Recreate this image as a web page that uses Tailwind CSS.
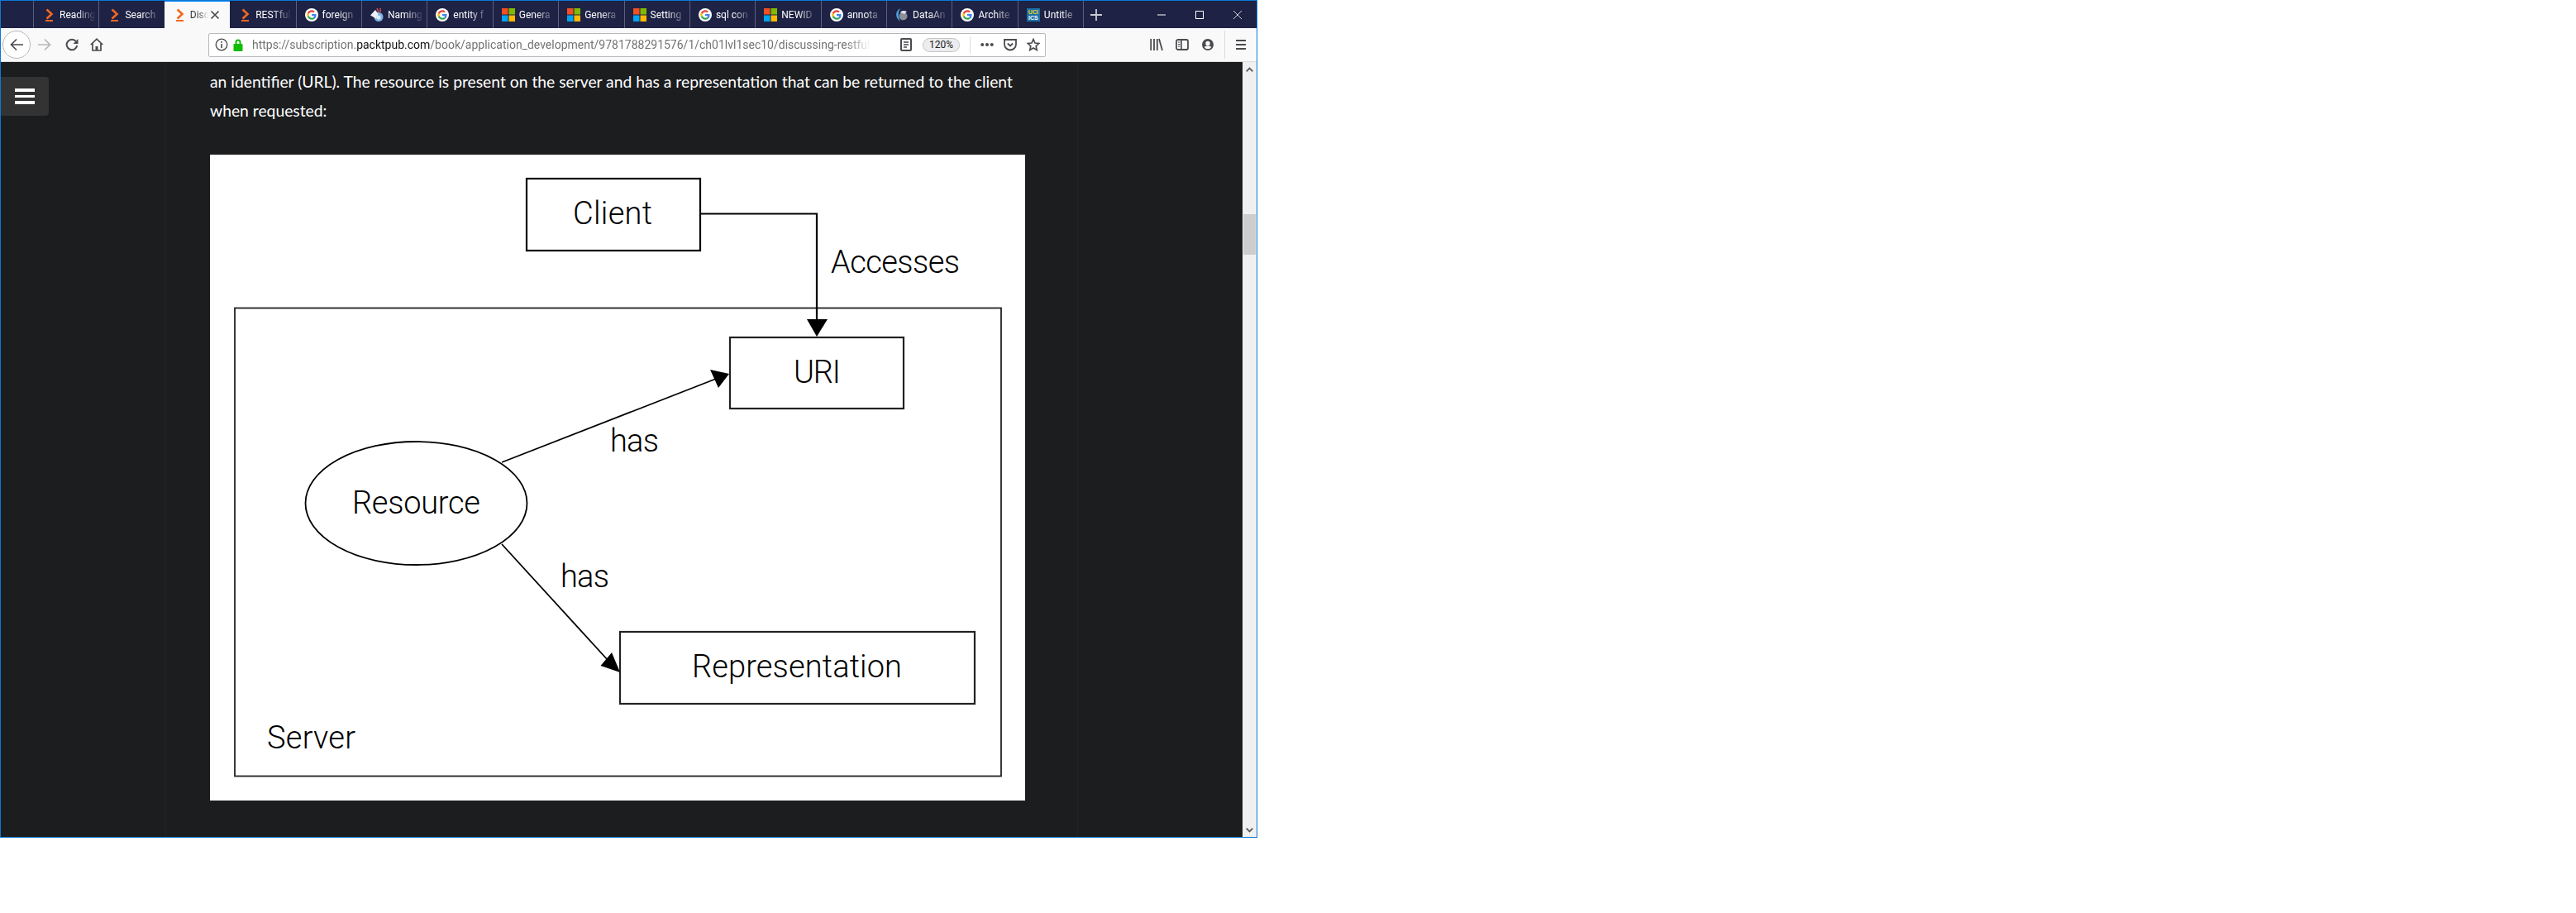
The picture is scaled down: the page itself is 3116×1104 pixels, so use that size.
<!DOCTYPE html>
<html lang="en">
<head>
  <meta charset="UTF-8" />
  <title>Discussing RESTful services</title>
  <script src="https://cdn.jsdelivr.net/npm/@tailwindcss/browser@4"></script>
</head>
<body class="bg-white font-[family-name:Roboto,sans-serif]">
  <!-- shared tab icons -->
  <svg class="hidden">
    <symbol id="packt" viewBox="0 0 16 16">
      <path d="M5.5 1.5 11.5 7 5.5 12.5" fill="none" stroke="#f26722" stroke-width="2.6"/>
      <rect x="4" y="14" width="9" height="2" fill="#f26722"/>
    </symbol>
    <symbol id="google" viewBox="0 0 16 16">
      <circle cx="8" cy="8" r="8" fill="#fff"/>
      <g transform="translate(2.2 2.2) scale(.242)">
        <path fill="#EA4335" d="M24 9.5c3.54 0 6.71 1.22 9.21 3.6l6.85-6.85C35.9 2.38 30.47 0 24 0 14.62 0 6.51 5.38 2.56 13.22l7.98 6.19C12.43 13.72 17.74 9.5 24 9.5z"/>
        <path fill="#4285F4" d="M46.98 24.55c0-1.57-.15-3.09-.38-4.55H24v9.02h12.94c-.58 2.96-2.26 5.48-4.78 7.18l7.73 6c4.51-4.18 7.09-10.36 7.09-17.65z"/>
        <path fill="#FBBC05" d="M10.53 28.59c-.48-1.45-.76-2.99-.76-4.59s.27-3.14.76-4.59l-7.98-6.19C.92 16.46 0 20.12 0 24c0 3.88.92 7.54 2.56 10.78l7.97-6.19z"/>
        <path fill="#34A853" d="M24 48c6.48 0 11.93-2.13 15.89-5.81l-7.73-6c-2.15 1.45-4.92 2.3-8.16 2.3-6.26 0-11.57-4.22-13.47-9.91l-7.98 6.19C6.51 42.62 14.62 48 24 48z"/>
      </g>
    </symbol>
    <symbol id="ms" viewBox="0 0 16 16">
      <rect x="0" y="0" width="7.5" height="7.5" fill="#f25022"/>
      <rect x="8.5" y="0" width="7.5" height="7.5" fill="#7fba00"/>
      <rect x="0" y="8.5" width="7.5" height="7.5" fill="#00a4ef"/>
      <rect x="8.5" y="8.5" width="7.5" height="7.5" fill="#ffb900"/>
    </symbol>
  </svg>

  <div class="w-[1521px] h-[1013px] border border-[#0a78d7] flex flex-col overflow-hidden">
    <!-- tab strip -->
    <div class="h-[33px] flex bg-[#1e2244] text-[12px] text-white">
      <div class="w-[39px]"></div>

      <div class="w-[79.4px] shrink-0 border-l border-[#5c5f7c] flex items-center pl-[10px] gap-[5px]">
        <svg class="w-4 h-4 shrink-0"><use href="#packt"/></svg>
        <span class="w-[44px] whitespace-nowrap [mask-image:linear-gradient(to_right,black_45%,transparent)]">Reading</span>
      </div>
      <div class="w-[79.4px] shrink-0 border-l border-[#5c5f7c] flex items-center pl-[10px] gap-[5px]">
        <svg class="w-4 h-4 shrink-0"><use href="#packt"/></svg>
        <span class="w-[44px] whitespace-nowrap [mask-image:linear-gradient(to_right,black_45%,transparent)]">Search</span>
      </div>
      <div class="w-[79.4px] shrink-0 bg-[#f9f9fa] border-t-2 border-[#0a84ff] -mt-px flex items-center pl-[10px] gap-[5px] text-[#38383d]">
        <svg class="w-4 h-4 shrink-0"><use href="#packt"/></svg>
        <span class="w-[22px] whitespace-nowrap [mask-image:linear-gradient(to_right,black_40%,transparent)]">Disc</span>
        <svg class="w-[12px] h-[12px] ml-[-3px] shrink-0" viewBox="0 0 12 12"><path d="M1.5 1.5 10.5 10.5M10.5 1.5 1.5 10.5" stroke="#4a4a4f" stroke-width="1.7"/></svg>
      </div>
      <div class="w-[79.4px] shrink-0 flex items-center pl-[10px] gap-[5px]">
        <svg class="w-4 h-4 shrink-0"><use href="#packt"/></svg>
        <span class="w-[44px] whitespace-nowrap [mask-image:linear-gradient(to_right,black_45%,transparent)]">RESTful</span>
      </div>
      <div class="w-[79.4px] shrink-0 border-l border-[#5c5f7c] flex items-center pl-[10px] gap-[5px]">
        <svg class="w-4 h-4 shrink-0"><use href="#google"/></svg>
        <span class="w-[44px] whitespace-nowrap [mask-image:linear-gradient(to_right,black_45%,transparent)]">foreign</span>
      </div>
      <div class="w-[79.4px] shrink-0 border-l border-[#5c5f7c] flex items-center pl-[10px] gap-[5px]">
        <svg class="w-4 h-4 shrink-0" viewBox="0 0 16 16">
          <circle cx="10" cy="10.500" r="5.500" fill="#7fb2e5"/>
          <path d="M0 8.500 6 2l3.500 4.500-2.500 6z" fill="#eef2f8"/>
          <path d="M8 0l2 5M12 0v5" stroke="#d9534f" stroke-width="1.500"/>
          <circle cx="10" cy="11" r="2.600" fill="#dcebf9"/>
        </svg>
        <span class="w-[44px] whitespace-nowrap [mask-image:linear-gradient(to_right,black_45%,transparent)]">Naming</span>
      </div>
      <div class="w-[79.4px] shrink-0 border-l border-[#5c5f7c] flex items-center pl-[10px] gap-[5px]">
        <svg class="w-4 h-4 shrink-0"><use href="#google"/></svg>
        <span class="w-[44px] whitespace-nowrap [mask-image:linear-gradient(to_right,black_45%,transparent)]">entity f</span>
      </div>
      <div class="w-[79.4px] shrink-0 border-l border-[#5c5f7c] flex items-center pl-[10px] gap-[5px]">
        <svg class="w-4 h-4 shrink-0"><use href="#ms"/></svg>
        <span class="w-[44px] whitespace-nowrap [mask-image:linear-gradient(to_right,black_45%,transparent)]">Genera</span>
      </div>
      <div class="w-[79.4px] shrink-0 border-l border-[#5c5f7c] flex items-center pl-[10px] gap-[5px]">
        <svg class="w-4 h-4 shrink-0"><use href="#ms"/></svg>
        <span class="w-[44px] whitespace-nowrap [mask-image:linear-gradient(to_right,black_45%,transparent)]">Genera</span>
      </div>
      <div class="w-[79.4px] shrink-0 border-l border-[#5c5f7c] flex items-center pl-[10px] gap-[5px]">
        <svg class="w-4 h-4 shrink-0"><use href="#ms"/></svg>
        <span class="w-[44px] whitespace-nowrap [mask-image:linear-gradient(to_right,black_45%,transparent)]">Setting</span>
      </div>
      <div class="w-[79.4px] shrink-0 border-l border-[#5c5f7c] flex items-center pl-[10px] gap-[5px]">
        <svg class="w-4 h-4 shrink-0"><use href="#google"/></svg>
        <span class="w-[44px] whitespace-nowrap [mask-image:linear-gradient(to_right,black_45%,transparent)]">sql con</span>
      </div>
      <div class="w-[79.4px] shrink-0 border-l border-[#5c5f7c] flex items-center pl-[10px] gap-[5px]">
        <svg class="w-4 h-4 shrink-0"><use href="#ms"/></svg>
        <span class="w-[44px] whitespace-nowrap [mask-image:linear-gradient(to_right,black_45%,transparent)]">NEWID</span>
      </div>
      <div class="w-[79.4px] shrink-0 border-l border-[#5c5f7c] flex items-center pl-[10px] gap-[5px]">
        <svg class="w-4 h-4 shrink-0"><use href="#google"/></svg>
        <span class="w-[44px] whitespace-nowrap [mask-image:linear-gradient(to_right,black_45%,transparent)]">annota</span>
      </div>
      <div class="w-[79.4px] shrink-0 border-l border-[#5c5f7c] flex items-center pl-[10px] gap-[5px]">
        <svg class="w-4 h-4 shrink-0" viewBox="0 0 16 16">
          <path d="M6 0C0 3-1 11 6 16 3 10 3 5 6 0z" fill="#4aa3df"/>
          <circle cx="9.500" cy="9.500" r="5" fill="#8b8f99"/>
          <path d="M6 5c2-2.500 5-2.500 8-1l-3 3z" fill="#dfe2e8"/>
        </svg>
        <span class="w-[44px] whitespace-nowrap [mask-image:linear-gradient(to_right,black_45%,transparent)]">DataAn</span>
      </div>
      <div class="w-[79.4px] shrink-0 border-l border-[#5c5f7c] flex items-center pl-[10px] gap-[5px]">
        <svg class="w-4 h-4 shrink-0"><use href="#google"/></svg>
        <span class="w-[44px] whitespace-nowrap [mask-image:linear-gradient(to_right,black_45%,transparent)]">Archite</span>
      </div>
      <div class="w-[79.4px] shrink-0 border-l border-[#5c5f7c] flex items-center pl-[10px] gap-[5px]">
        <div class="w-4 h-4 shrink-0 bg-[#1b6fa8] flex flex-col items-center justify-center text-[7px] leading-[7px] font-bold font-[family-name:'Liberation_Sans',sans-serif]">
          <span class="text-[#f5d518]">UCI</span>
          <span class="text-white">ICS</span>
        </div>
        <span class="w-[44px] whitespace-nowrap [mask-image:linear-gradient(to_right,black_45%,transparent)]">Untitle</span>
      </div>

      <div class="w-px bg-[#5c5f7c] shrink-0"></div>
      <div class="w-[30px] shrink-0 flex items-center justify-center">
        <svg class="w-[14px] h-[14px]" viewBox="0 0 14 14"><path d="M7 0V14M0 7H14" stroke="#c9cad4" stroke-width="1.8"/></svg>
      </div>
      <div class="ml-auto flex">
        <div class="w-[46px] flex items-center justify-center">
          <svg class="w-[10px] h-[10px]" viewBox="0 0 10 10"><path d="M0 5H10" stroke="#fff"/></svg>
        </div>
        <div class="w-[46px] flex items-center justify-center">
          <svg class="w-[10px] h-[10px]" viewBox="0 0 10 10"><rect x=".5" y=".5" width="9" height="9" fill="none" stroke="#fff"/></svg>
        </div>
        <div class="w-[46px] flex items-center justify-center">
          <svg class="w-[10px] h-[10px]" viewBox="0 0 10 10"><path d="M0 0 10 10M10 0 0 10" stroke="#fff" stroke-width=".8"/></svg>
        </div>
      </div>
    </div>

    <!-- nav toolbar -->
    <div class="h-[41px] flex items-center bg-[#f9f9fa] border-b border-[#dcdcde] text-[#4a4a4f]">
      <div class="ml-[2px] w-[34px] h-[34px] shrink-0 rounded-full border border-[#b8b8ba] bg-white flex items-center justify-center">
        <svg class="w-4 h-4" viewBox="0 0 16 16" fill="none" stroke="#4a4a4f" stroke-width="1.7"><path d="M16 8H1.5M8 1.5 1.500 8 8 14.500"/></svg>
      </div>
      <div class="ml-[2px] w-[30px] shrink-0 flex justify-center">
        <svg class="w-4 h-4" viewBox="0 0 16 16" fill="none" stroke="#b6b6b8" stroke-width="1.7"><path d="M0 8H14.5M8 1.5 14.500 8 8 14.500"/></svg>
      </div>
      <div class="ml-[3px] w-[30px] shrink-0 flex justify-center">
        <svg class="w-4 h-4" viewBox="0 0 16 16" fill="none"><path d="M13 4.2A6.3 6.3 0 1 0 14.2 9" stroke="#4a4a4f" stroke-width="2"/><path d="M15.5 1v6h-6z" fill="#4a4a4f"/></svg>
      </div>
      <div class="w-[30px] shrink-0 flex justify-center">
        <svg class="w-4 h-4" viewBox="0 0 16 16" fill="none" stroke="#4a4a4f" stroke-width="1.7"><path d="M.8 8 8 1.2 15.2 8M3 6.5V15H13V6.5"/><rect x="6.5" y="10" width="3" height="5" fill="#4a4a4f" stroke="none"/></svg>
      </div>

      <!-- url bar -->
      <div class="ml-[120px] w-[1013px] h-[29px] shrink-0 flex items-center bg-white border border-[#b9b9bb] rounded-[2px] pl-[7px]">
        <svg class="w-4 h-4 shrink-0" viewBox="0 0 16 16" fill="none" stroke="#4a4a4f"><circle cx="8" cy="8" r="6.8" stroke-width="1.3"/><path d="M8 7v5M8 4v1.7" stroke-width="1.6"/></svg>
        <svg class="ml-[4px] w-4 h-4 shrink-0" viewBox="0 0 16 16" fill="#12bc00"><path d="M4.5 7V5a3.5 3.5 0 0 1 7 0v2h-2V5a1.5 1.5 0 0 0-3 0v2z"/><rect x="2.5" y="7" width="11" height="9" rx="1"/></svg>
        <div class="ml-[9px] w-[748px] shrink-0 whitespace-nowrap text-[14px] text-[#737373] [mask-image:linear-gradient(to_right,black_96%,transparent)]">https://subscription.<span class="text-[#111]">packtpub.com</span>/book/application_development/9781788291576/1/ch01lvl1sec10/discussing-restful-ser</div>
        <svg class="ml-[35px] w-4 h-4 shrink-0" viewBox="0 0 16 16" fill="none" stroke="#4a4a4f"><rect x="2" y="1" width="12" height="14" rx="1" stroke-width="2"/><path d="M5 5H11M5 8H11M5 11H9" stroke-width="1.3"/></svg>
        <div class="ml-[12px] w-[45px] h-[17px] shrink-0 rounded-full bg-[#ededf0] border border-[#c4c4c6] flex items-center justify-center text-[12px] text-[#222]">120%</div>
        <div class="ml-[12px] w-px h-[21px] shrink-0 bg-[#dcdcde]"></div>
        <svg class="ml-[12px] w-4 h-4 shrink-0" viewBox="0 0 16 16" fill="#4a4a4f"><circle cx="2.2" cy="8" r="2"/><circle cx="8" cy="8" r="2"/><circle cx="13.8" cy="8" r="2"/></svg>
        <svg class="ml-[12px] w-4 h-4 shrink-0" viewBox="0 0 16 16" fill="none" stroke="#4a4a4f"><path d="M1 2H15V7.5C15 11.5 11.5 14.5 8 14.5S1 11.5 1 7.5z" stroke-width="1.8"/><path d="M4.8 6.5 8 9.5 11.2 6.5" stroke-width="1.8"/></svg>
        <svg class="ml-[12px] w-4 h-4 shrink-0" viewBox="0 0 16 16" fill="none" stroke="#4a4a4f" stroke-width="1.7"><path d="M8 1.5 10 6l4.8.5-3.6 3.2 1 4.8L8 12l-4.2 2.5 1-4.8L1.2 6.5 6 6z"/></svg>
      </div>

      <!-- right side -->
      <div class="ml-[118px] w-[31px] shrink-0 flex justify-center">
        <svg class="w-4 h-4" viewBox="0 0 16 16" fill="none" stroke="#4a4a4f" stroke-width="1.8"><path d="M1.2 1V15M5 1V15M8.8 1V15M11 1 15 15"/></svg>
      </div>
      <div class="w-[31px] shrink-0 flex justify-center">
        <svg class="w-4 h-4" viewBox="0 0 16 16" fill="none" stroke="#4a4a4f"><rect x="1" y="2" width="14" height="12" rx="2" stroke-width="1.8"/><path d="M7 2V14" stroke-width="1.6"/><path d="M3 5H5.5M3 7.5H5.5M3 10H5.5" stroke-width="1.2"/></svg>
      </div>
      <div class="w-[32px] shrink-0 flex justify-center">
        <svg class="w-4 h-4" viewBox="0 0 16 16" fill="#4a4a4f"><path fill-rule="evenodd" d="M8 1a7 7 0 1 0 0 14A7 7 0 0 0 8 1zM8 3.8a2.7 2.7 0 1 1 0 5.4 2.7 2.7 0 0 1 0-5.4zM3.7 11c1-.9 2.7-1.4 4.3-1.4s3.3.5 4.3 1.4A5.4 5.4 0 0 1 8 13.3 5.4 5.4 0 0 1 3.7 11z"/></svg>
      </div>
      <div class="ml-[4px] w-px h-[34px] shrink-0 bg-[#dcdcde]"></div>
      <div class="ml-[4px] w-[30px] shrink-0 flex justify-center">
        <svg class="w-4 h-4" viewBox="0 0 16 16" fill="#4a4a4f"><rect x="2" y="2" width="12" height="2"/><rect x="2" y="7" width="12" height="2"/><rect x="2" y="12" width="12" height="2"/></svg>
      </div>
    </div>

    <!-- page -->
    <div class="flex-1 flex min-h-0 bg-[#1c1d1f]">
      <div class="w-[199px] shrink-0 pt-[18px]">
        <div class="w-[58px] h-[47px] bg-[#333334] rounded-r-[4px] flex flex-col items-center justify-center gap-[4px]">
          <div class="w-[24px] h-[3.5px] bg-white"></div>
          <div class="w-[24px] h-[3.5px] bg-white"></div>
          <div class="w-[24px] h-[3.5px] bg-white"></div>
        </div>
      </div>

      <main class="w-[1104px] shrink-0 border-x border-[#222325] pl-[53px] pt-[6px] overflow-hidden">
        <p class="text-[19.3px] leading-[35px] text-white whitespace-nowrap font-[family-name:Lato,sans-serif]">an identifier (URL). The resource is present on the server and has a representation that can be returned to the client<br />when requested:</p>

        <!-- figure, coordinates follow the page pixels -->
        <div class="mt-[36px] w-[986px] h-[781px] bg-white">
          <svg class="block w-[986px] h-[781px]" viewBox="254 187 986 781" fill="none" stroke="#000">
            <rect x="284" y="372.5" width="927" height="566" stroke="#222" stroke-width="1.8"/>
            <rect x="637" y="216" width="210" height="87" stroke-width="2.2"/>
            <rect x="883" y="408" width="210" height="86" stroke="#222" stroke-width="2.2"/>
            <rect x="750" y="764" width="429" height="87" stroke="#222" stroke-width="2.2"/>
            <ellipse cx="503.5" cy="608.5" rx="134" ry="74.5" stroke-width="1.8"/>

            <path d="M847 258.5H988V390" stroke-width="2.2"/>
            <path d="M988 407 976 386H1001z" fill="#000" stroke="none"/>
            <path d="M607 559 870 456.5" stroke-width="1.8"/>
            <path d="M882 452 859 447 869 469z" fill="#000" stroke="none"/>
            <path d="M607 658 735 798" stroke-width="1.8"/>
            <path d="M750 813 726.5 805 740 789z" fill="#000" stroke="none"/>

            <g fill="#000" stroke="none" font-family="Roboto, sans-serif" font-weight="300" font-size="38">
              <text x="693" y="271" textLength="96">Client</text>
              <text x="1005" y="330" textLength="156">Accesses</text>
              <text x="960" y="463" textLength="57">URI</text>
              <text x="426" y="621" textLength="155">Resource</text>
              <text x="738" y="546" textLength="59">has</text>
              <text x="678" y="710" textLength="59">has</text>
              <text x="837" y="819" textLength="254">Representation</text>
              <text x="323" y="905" textLength="107">Server</text>
            </g>
          </svg>
        </div>
      </main>

      <div class="flex-1"></div>

      <!-- scrollbar -->
      <div class="w-[17px] shrink-0 bg-[#f0f0f0] relative">
        <svg class="absolute left-[4px] top-[6px] w-[9px] h-[6px]" viewBox="0 0 9 6" fill="none" stroke="#5a5a5a" stroke-width="1.8"><path d="M.7 5.3 4.5 1.5 8.3 5.3"/></svg>
        <div class="absolute left-px top-[184px] w-[15px] h-[49px] bg-[#cdcdcd]"></div>
        <svg class="absolute left-[4px] bottom-[5px] w-[9px] h-[6px]" viewBox="0 0 9 6" fill="none" stroke="#5a5a5a" stroke-width="1.8"><path d="M.7 .7 4.5 4.5 8.3 .7"/></svg>
      </div>
    </div>
  </div>
</body>
</html>
